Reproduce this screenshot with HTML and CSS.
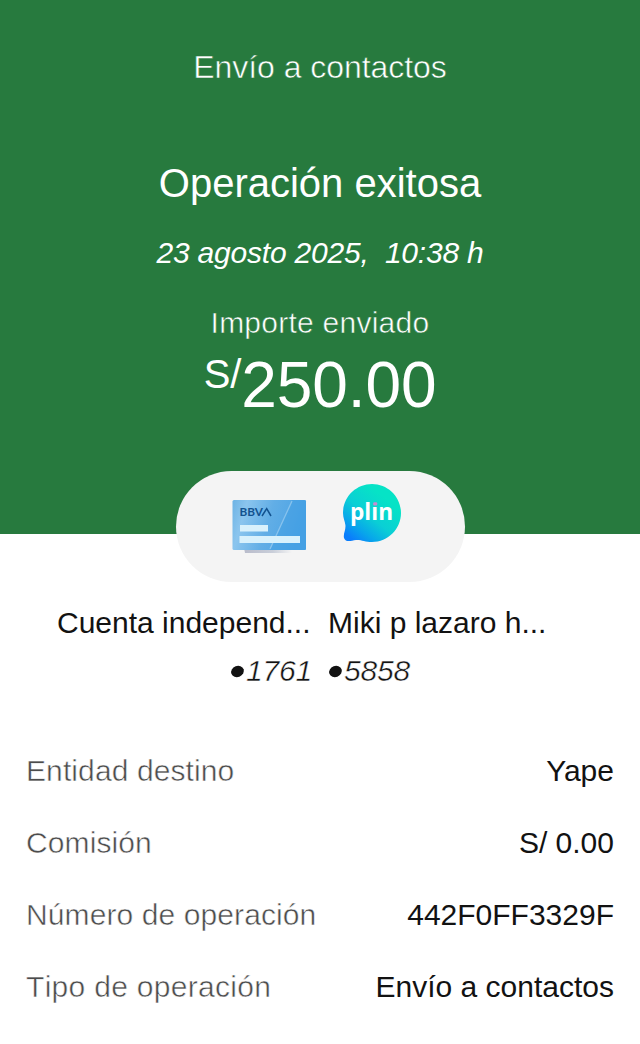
FILE: index.html
```html
<!DOCTYPE html>
<html lang="es">
<head>
<meta charset="utf-8">
<title>Envío a contactos</title>
<link rel="stylesheet" href="styles.css">
</head>
<body>
<main class="receipt">
  <header class="hero">
    <div class="screen-title thin">Envío a contactos</div>
    <h1 class="status">Operación exitosa</h1>
    <div class="date">23 agosto 2025,&nbsp; 10:38 h</div>
    <div class="amount-label thin">Importe enviado</div>
    <div class="amount"><span class="currency">S/</span><span>250.00</span></div>
  </header>
  <div class="pill">
    <svg class="card-icon" width="76" height="56" viewBox="0 0 76 56">
      <defs>
        <linearGradient id="card" x1="0" y1="0" x2="1" y2="0.2">
          <stop offset="0" stop-color="#6db3e4"/><stop offset=".2" stop-color="#8bc5ee"/><stop offset=".55" stop-color="#62aee6"/><stop offset="1" stop-color="#4ba3e5"/>
        </linearGradient>
        <linearGradient id="shade" x1="0" y1="0" x2="1" y2="0">
          <stop offset="0" stop-color="#b9bccb"/><stop offset=".6" stop-color="#c9ced9"/><stop offset="1" stop-color="#f4f4f4"/>
        </linearGradient>
      </defs>
      <path d="M12 49H60V54H13Z" fill="url(#shade)"/>
      <rect x="0.5" y="1" width="73.5" height="50" rx="1.5" fill="url(#card)"/>
      <path d="M60 1H74V51H38Z" fill="#3f9de2" opacity=".45"/>
      <path d="M60 2L38 50" stroke="#9bcdf1" stroke-width="1.3" opacity=".75"/>
      <text class="bank" x="7.5" y="17.2" textLength="23.5" lengthAdjust="spacingAndGlyphs">BBV</text>
      <path d="M30 17L34.7 9.6L39 17" class="bank-a"/>
      <rect x="8" y="26" width="28" height="6.5" fill="#d9f1fc"/>
      <rect x="7.5" y="37" width="60.5" height="7" fill="#d9f1fc"/>
    </svg>
    <svg class="plin-icon" width="60" height="60" viewBox="0 0 60 60">
      <defs>
        <linearGradient id="bubble" x1=".08" y1=".9" x2=".65" y2=".18">
          <stop offset="0" stop-color="#0a7dfc"/><stop offset=".25" stop-color="#08a7ea"/><stop offset=".55" stop-color="#0acfd5"/><stop offset="1" stop-color="#06e3c6"/>
        </linearGradient>
      </defs>
      <path d="M30 1C46 1 59 14 59 30C59 46 46 59 30 59C23 59 19 56.5 14 57C9 57.5 4 60 2 55C1 51 4 47 3.4 42C3 38 1 35 1 30C1 14 14 1 30 1Z" fill="url(#bubble)"/>
      <text class="plin" x="8" y="36.8" textLength="43" lengthAdjust="spacingAndGlyphs">plın</text>
      <rect x="31.2" y="19.2" width="4" height="3.2" rx="1" fill="#c98bd0"/>
    </svg>
  </div>
  <section class="parties">
    <div class="party party-from"><div class="name">Cuenta independ...</div><div class="account"><span class="dot"></span><span class="number">1761</span></div></div>
    <div class="party"><div class="name">Miki p lazaro h...</div><div class="account"><span class="dot"></span><span class="number">5858</span></div></div>
  </section>
  <dl class="details">
    <div class="row"><dt>Entidad destino</dt><dd>Yape</dd></div>
    <div class="row"><dt>Comisión</dt><dd>S/ 0.00</dd></div>
    <div class="row"><dt>Número de operación</dt><dd>442F0FF3329F</dd></div>
    <div class="row"><dt class="unkerned">Tipo de operación</dt><dd>Envío a contactos</dd></div>
  </dl>
</main>
</body>
</html>
```
FILE: styles.css
```css
* { box-sizing: border-box; }
body { margin: 0; background: #fff; font-family: "Liberation Sans", Arial, sans-serif; font-size: 30px; color: #121212; }
.receipt { width: 640px; height: 1044px; overflow: hidden; }
.hero { height: 534px; padding-top: 47px; background: #277a3e; color: #fff; display: flex; flex-direction: column; align-items: center; white-space: nowrap; }
/* A background-coloured outline lightens the stroke weight. */
.thin { -webkit-text-stroke: 0.55px #277a3e; }
.screen-title { font-size: 32px; line-height: 40px; letter-spacing: -0.05px; }
.status { margin: 72px 0 0; font-size: 40px; font-weight: 400; line-height: 48px; }
.date { margin-top: 26px; line-height: 40px; font-style: italic; letter-spacing: -0.2px; }
.amount-label { margin-top: 30px; line-height: 40px; letter-spacing: 0.25px; }
.amount { display: flex; align-items: flex-start; margin-top: 11px; font-size: 64px; line-height: 62px; letter-spacing: -0.1px; }
.currency { font-size: 40px; line-height: 41px; }
.pill { width: 289px; height: 111px; margin: -63px auto 0; padding: 12px 0 0 56px; border-radius: 56px; background: #f4f4f4; display: flex; gap: 34px; position: relative; }
.card-icon { margin-top: 16px; }
.bank { font-family: Lato, sans-serif; font-size: 11px; font-weight: 700; fill: #12528f; }
.bank-a { fill: none; stroke: #12528f; stroke-width: 1.5; }
.plin { font-family: "Open Sans", sans-serif; font-size: 24px; font-weight: 700; fill: #fff; }
.parties { margin-top: 17px; padding-left: 57px; display: flex; gap: 16px; white-space: nowrap; }
.party { line-height: 48px; }
.party-from { width: 255px; }
.account { display: flex; align-items: center; font-style: italic; -webkit-text-stroke: 0.45px #fff; }
.party-from .account { justify-content: flex-end; }
.dot { width: 13px; height: 11px; margin: 0 2px 0 1px; border-radius: 50%; background: #121212; transform: rotate(-20deg); }
.number { letter-spacing: -0.2px; }
.details { margin: 40px 0 0; padding: 0 26px; line-height: 72px; }
.row { display: flex; justify-content: space-between; }
dt { color: #4c4c4c; letter-spacing: 0.1px; -webkit-text-stroke: 0.5px #fff; }
.unkerned { font-kerning: none; letter-spacing: 0.3px; }
dd { margin: 0; }
```
